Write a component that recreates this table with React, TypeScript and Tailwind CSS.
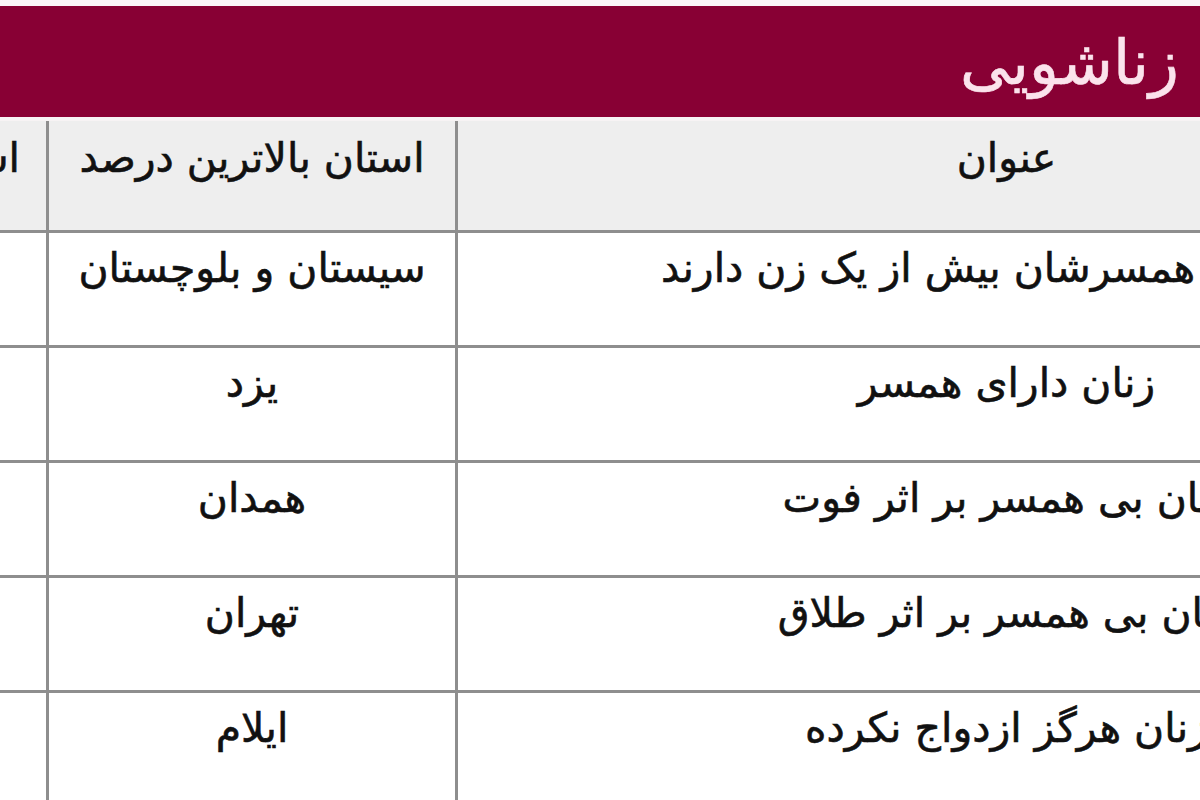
import React from "react";

const rows: [string, string, string][] = [
  ["قم", "سیستان و بلوچستان", "زنانی که همسرشان بیش از یک زن دارند"],
  ["گیلان", "یزد", "زنان دارای همسر"],
  ["ایلام", "همدان", "زنان بی همسر بر اثر فوت"],
  ["یزد", "تهران", "زنان بی همسر بر اثر طلاق"],
  ["تهران", "ایلام", "زنان هرگز ازدواج نکرده"],
];

const font = { fontFamily: '"DejaVu Sans", Tahoma, sans-serif' };

const cell = "text-center text-[41px] text-[#111] leading-[50px] whitespace-nowrap [-webkit-text-stroke:0.6px_#111]";

export default function App() {
  return (
    <div className="w-[1200px] h-[800px] overflow-hidden bg-[#fbf4f7] pt-[6px]" style={font}>
      <div className="ml-[-360px] w-[2100px]">
        <div className="h-[111px] bg-[#880034] flex items-center">
          <span dir="rtl" className="ml-[1320px] mt-[2px] text-[62px] text-[#fbe3ec] whitespace-nowrap leading-none [-webkit-text-stroke:0.6px_#fbe3ec]">
            وضعیت زناشویی
          </span>
        </div>
        <div className="h-[4px] bg-[#f7f3f4]" />
        <div className="grid grid-cols-[406px_406px_1097px_188px] gap-[3px] bg-[#8e8e8e]">
          <div className={`h-[109px] bg-[#eeeeee] pt-[12px] pr-[26px] text-right text-[41px] text-[#111] leading-[50px] whitespace-nowrap [-webkit-text-stroke:0.6px_#111]`} dir="rtl">
            استان پایین ترین
          </div>
          <div className={`h-[109px] bg-[#eeeeee] pt-[12px] ${cell}`} dir="rtl">
            استان بالاترین درصد
          </div>
          <div className={`h-[109px] bg-[#eeeeee] pt-[12px] ${cell}`} dir="rtl">
            عنوان
          </div>
          <div className={`h-[109px] bg-[#eeeeee] pt-[12px] ${cell}`} dir="rtl">
            ردیف
          </div>
          {rows.map((r, i) => (
            <React.Fragment key={i}>
              <div className={`h-[112px] bg-white pt-[10px] ${cell}`} dir="rtl">
                {r[0]}
              </div>
              <div className={`h-[112px] bg-white pt-[10px] ${cell}`} dir="rtl">
                {r[1]}
              </div>
              <div className={`h-[112px] bg-white pt-[10px] ${cell}`} dir="rtl">
                {r[2]}
              </div>
              <div className={`h-[112px] bg-white pt-[10px] ${cell}`} dir="rtl">
                {i + 1}
              </div>
            </React.Fragment>
          ))}
        </div>
      </div>
    </div>
  );
}
